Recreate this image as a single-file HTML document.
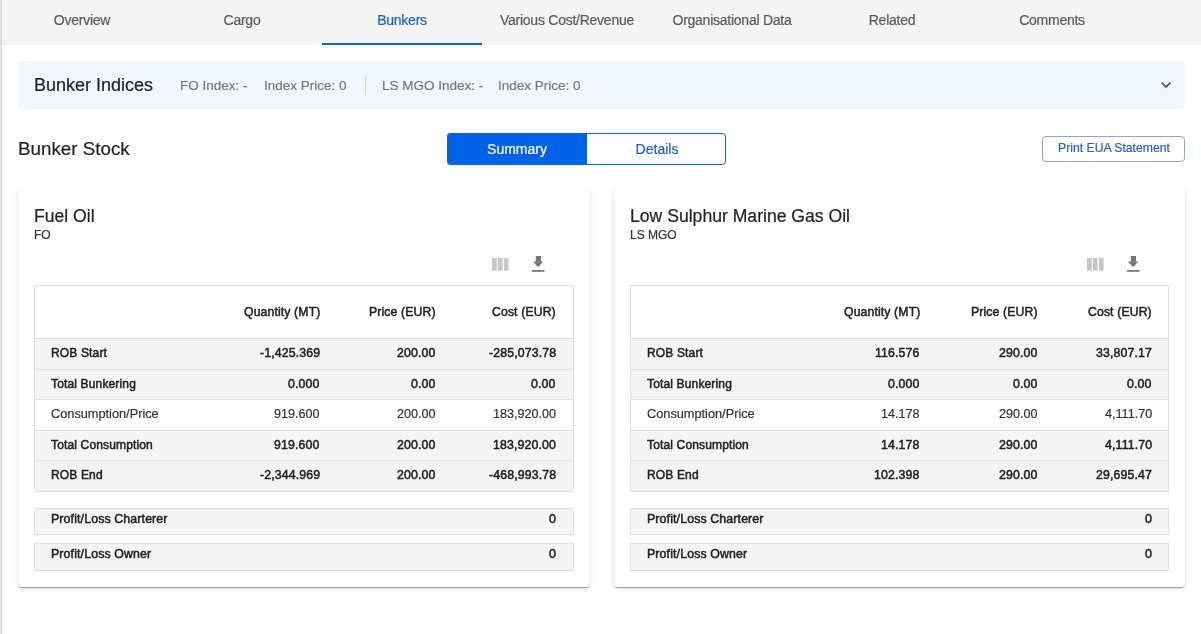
<!DOCTYPE html>
<html><head><meta charset="utf-8"><style>
html,body{margin:0;padding:0;width:1201px;height:634px;overflow:hidden;background:#fff;font-family:"Liberation Sans", sans-serif;position:relative}
</style></head><body>
<div style="position:absolute;left:0px;top:0px;width:1px;height:634px;background:#e4e4e4"></div>
<div style="position:absolute;left:1px;top:0px;width:1px;height:634px;background:#d8d8d8"></div>
<div style="position:absolute;left:2px;top:0px;width:1199px;height:45px;background:#f4f4f4"></div>
<div style="position:absolute;left:-218px;width:600px;text-align:center;top:12.21px;font-size:14px;line-height:16.086px;height:16.086px;color:#5a5a5a;font-weight:normal;white-space:nowrap;will-change:transform;letter-spacing:-0.25px;-webkit-text-stroke:0.2px #5a5a5a;">Overview</div>
<div style="position:absolute;left:-58px;width:600px;text-align:center;top:12.21px;font-size:14px;line-height:16.086px;height:16.086px;color:#5a5a5a;font-weight:normal;white-space:nowrap;will-change:transform;letter-spacing:-0.25px;-webkit-text-stroke:0.2px #5a5a5a;">Cargo</div>
<div style="position:absolute;left:102px;width:600px;text-align:center;top:12.21px;font-size:14px;line-height:16.086px;height:16.086px;color:#1f5fbf;font-weight:normal;white-space:nowrap;will-change:transform;letter-spacing:-0.25px;-webkit-text-stroke:0.2px #1f5fbf;">Bunkers</div>
<div style="position:absolute;left:267px;width:600px;text-align:center;top:12.21px;font-size:14px;line-height:16.086px;height:16.086px;color:#5a5a5a;font-weight:normal;white-space:nowrap;will-change:transform;letter-spacing:-0.25px;-webkit-text-stroke:0.2px #5a5a5a;">Various Cost/Revenue</div>
<div style="position:absolute;left:432px;width:600px;text-align:center;top:12.21px;font-size:14px;line-height:16.086px;height:16.086px;color:#5a5a5a;font-weight:normal;white-space:nowrap;will-change:transform;letter-spacing:-0.25px;-webkit-text-stroke:0.2px #5a5a5a;">Organisational Data</div>
<div style="position:absolute;left:592px;width:600px;text-align:center;top:12.21px;font-size:14px;line-height:16.086px;height:16.086px;color:#5a5a5a;font-weight:normal;white-space:nowrap;will-change:transform;letter-spacing:-0.25px;-webkit-text-stroke:0.2px #5a5a5a;">Related</div>
<div style="position:absolute;left:752px;width:600px;text-align:center;top:12.21px;font-size:14px;line-height:16.086px;height:16.086px;color:#5a5a5a;font-weight:normal;white-space:nowrap;will-change:transform;letter-spacing:-0.25px;-webkit-text-stroke:0.2px #5a5a5a;">Comments</div>
<div style="position:absolute;left:322px;top:43px;width:160px;height:2px;background:#1d5cb9"></div>
<div style="position:absolute;left:18px;top:61px;width:1167px;height:48px;background:#f2f6fd;border-radius:5px"></div>
<div style="position:absolute;left:33.8px;top:74.72px;font-size:18px;line-height:20.682px;height:20.682px;color:#222;font-weight:normal;white-space:nowrap;will-change:transform;-webkit-text-stroke:0.2px #222;">Bunker Indices</div>
<div style="position:absolute;left:180px;top:78.07px;font-size:13.5px;line-height:15.511px;height:15.511px;color:#777;font-weight:normal;white-space:nowrap;will-change:transform;-webkit-text-stroke:0.2px #777;">FO Index: -</div>
<div style="position:absolute;left:263.7px;top:78.07px;font-size:13.5px;line-height:15.511px;height:15.511px;color:#777;font-weight:normal;white-space:nowrap;will-change:transform;-webkit-text-stroke:0.2px #777;">Index Price: 0</div>
<div style="position:absolute;left:365px;top:75px;width:1px;height:20px;background:#d8d8d8"></div>
<div style="position:absolute;left:382px;top:78.07px;font-size:13.5px;line-height:15.511px;height:15.511px;color:#777;font-weight:normal;white-space:nowrap;will-change:transform;-webkit-text-stroke:0.2px #777;">LS MGO Index: -</div>
<div style="position:absolute;left:498px;top:78.07px;font-size:13.5px;line-height:15.511px;height:15.511px;color:#777;font-weight:normal;white-space:nowrap;will-change:transform;-webkit-text-stroke:0.2px #777;">Index Price: 0</div>
<svg style="position:absolute;left:1158px;top:78px" width="16" height="14" viewBox="0 0 16 14"><path d="M3.6 4.6 L8 9 L12.4 4.6" fill="none" stroke="#5a5a5a" stroke-width="1.8" stroke-linecap="butt"/></svg>
<div style="position:absolute;left:18.2px;top:137.89px;font-size:18.8px;line-height:21.601px;height:21.601px;color:#222;font-weight:normal;white-space:nowrap;will-change:transform;-webkit-text-stroke:0.2px #222;">Bunker Stock</div>
<div style="position:absolute;left:447px;top:133px;width:279px;height:32px;box-sizing:border-box;border:1px solid #1f5fbf;border-radius:4px;background:#fff"></div>
<div style="position:absolute;left:447px;top:133px;width:140px;height:32px;background:#0062e6;border-radius:4px 0 0 4px"></div>
<div style="position:absolute;left:217px;width:600px;text-align:center;top:141.31px;font-size:14px;line-height:16.086px;height:16.086px;color:#fff;font-weight:normal;white-space:nowrap;will-change:transform;-webkit-text-stroke:0.2px #fff;">Summary</div>
<div style="position:absolute;left:356.5px;width:600px;text-align:center;top:141.31px;font-size:14px;line-height:16.086px;height:16.086px;color:#1f5fbf;font-weight:normal;white-space:nowrap;will-change:transform;-webkit-text-stroke:0.2px #1f5fbf;">Details</div>
<div style="position:absolute;left:1042px;top:136px;width:143px;height:26px;box-sizing:border-box;border:1px solid #8aa7dc;border-radius:4px;background:#fff"></div>
<div style="position:absolute;left:813.5px;width:600px;text-align:center;top:141.26px;font-size:12.2px;line-height:14.018px;height:14.018px;color:#2a60c0;font-weight:normal;white-space:nowrap;will-change:transform;-webkit-text-stroke:0.2px #2a60c0;">Print EUA Statement</div>
<div style="position:absolute;left:18px;top:189px;width:572px;height:398px;background:#fff;border-radius:4px;box-shadow:0px 2px 1px -1px rgba(0,0,0,0.2),0px 1px 1px 0px rgba(0,0,0,0.14),0px 1px 3px 0px rgba(0,0,0,0.12),0px 2px 6px 0px rgba(0,0,0,0.05)"></div>
<div style="position:absolute;left:34px;top:206.29px;font-size:17.6px;line-height:20.222px;height:20.222px;color:#222;font-weight:normal;white-space:nowrap;will-change:transform;-webkit-text-stroke:0.2px #222;">Fuel Oil</div>
<div style="position:absolute;left:34px;top:229.05px;font-size:12px;line-height:13.788px;height:13.788px;color:#333;font-weight:normal;white-space:nowrap;will-change:transform;-webkit-text-stroke:0.2px #333;">FO</div>
<svg style="position:absolute;left:488px;top:252px" width="24" height="24" viewBox="488 252 24 24"><rect x="492" y="258" width="4.8" height="12.7" fill="#c6c6c6"/><rect x="497.9" y="258" width="4.7" height="12.7" fill="#c6c6c6"/><rect x="504" y="258" width="4.6" height="12.7" fill="#c6c6c6"/></svg>
<svg style="position:absolute;left:526px;top:252px" width="24" height="24" viewBox="526 252 24 24"><rect x="535.8" y="256" width="5.2" height="5.8" fill="#777"/><path d="M533 261.4 L543.3 261.4 L538.15 267.3 Z" fill="#777"/><rect x="532" y="270" width="12.5" height="1.8" fill="#777"/></svg>
<div style="position:absolute;left:34px;top:285px;width:540px;height:207px;box-sizing:border-box;border:1px solid #dedede;background:#fff"></div>
<div style="position:absolute;left:35px;top:338px;width:538px;height:31px;background:#f4f4f4;border-top:1px solid #dedede;box-sizing:border-box"></div>
<div style="position:absolute;left:35px;top:369px;width:538px;height:30px;background:#f4f4f4;border-top:1px solid #dedede;box-sizing:border-box"></div>
<div style="position:absolute;left:35px;top:399px;width:538px;height:31px;background:#fff;border-top:1px solid #dedede;box-sizing:border-box"></div>
<div style="position:absolute;left:35px;top:430px;width:538px;height:30px;background:#f4f4f4;border-top:1px solid #dedede;box-sizing:border-box"></div>
<div style="position:absolute;left:35px;top:460px;width:538px;height:31px;background:#f4f4f4;border-top:1px solid #dedede;box-sizing:border-box"></div>
<div style="position:absolute;right:881px;top:305.46px;font-size:12.2px;line-height:14.018px;height:14.018px;color:#222;font-weight:normal;white-space:nowrap;will-change:transform;-webkit-text-stroke:0.5px #222;letter-spacing:0.15px;">Quantity (MT)</div>
<div style="position:absolute;right:765px;top:305.46px;font-size:12.2px;line-height:14.018px;height:14.018px;color:#222;font-weight:normal;white-space:nowrap;will-change:transform;-webkit-text-stroke:0.5px #222;letter-spacing:0.15px;">Price (EUR)</div>
<div style="position:absolute;right:645px;top:305.46px;font-size:12.2px;line-height:14.018px;height:14.018px;color:#222;font-weight:normal;white-space:nowrap;will-change:transform;-webkit-text-stroke:0.5px #222;letter-spacing:0.15px;">Cost (EUR)</div>
<div style="position:absolute;left:51.3px;top:347.45px;font-size:12px;line-height:13.788px;height:13.788px;color:#222;font-weight:normal;white-space:nowrap;will-change:transform;-webkit-text-stroke:0.5px #222;letter-spacing:0.15px;">ROB Start</div>
<div style="position:absolute;right:881px;top:346.17px;font-size:12.3px;line-height:14.133px;height:14.133px;color:#222;font-weight:normal;white-space:nowrap;will-change:transform;-webkit-text-stroke:0.5px #222;letter-spacing:0.15px;">-1,425.369</div>
<div style="position:absolute;right:765px;top:346.17px;font-size:12.3px;line-height:14.133px;height:14.133px;color:#222;font-weight:normal;white-space:nowrap;will-change:transform;-webkit-text-stroke:0.5px #222;letter-spacing:0.15px;">200.00</div>
<div style="position:absolute;right:645px;top:346.17px;font-size:12.3px;line-height:14.133px;height:14.133px;color:#222;font-weight:normal;white-space:nowrap;will-change:transform;-webkit-text-stroke:0.5px #222;letter-spacing:0.15px;">-285,073.78</div>
<div style="position:absolute;left:51.3px;top:378.45px;font-size:12px;line-height:13.788px;height:13.788px;color:#222;font-weight:normal;white-space:nowrap;will-change:transform;-webkit-text-stroke:0.5px #222;letter-spacing:0.15px;">Total Bunkering</div>
<div style="position:absolute;right:881px;top:377.17px;font-size:12.3px;line-height:14.133px;height:14.133px;color:#222;font-weight:normal;white-space:nowrap;will-change:transform;-webkit-text-stroke:0.5px #222;letter-spacing:0.15px;">0.000</div>
<div style="position:absolute;right:765px;top:377.17px;font-size:12.3px;line-height:14.133px;height:14.133px;color:#222;font-weight:normal;white-space:nowrap;will-change:transform;-webkit-text-stroke:0.5px #222;letter-spacing:0.15px;">0.00</div>
<div style="position:absolute;right:645px;top:377.17px;font-size:12.3px;line-height:14.133px;height:14.133px;color:#222;font-weight:normal;white-space:nowrap;will-change:transform;-webkit-text-stroke:0.5px #222;letter-spacing:0.15px;">0.00</div>
<div style="position:absolute;left:51.3px;top:406.76px;font-size:12.75px;line-height:14.650px;height:14.650px;color:#333;font-weight:normal;white-space:nowrap;will-change:transform;-webkit-text-stroke:0.2px #333;">Consumption/Price</div>
<div style="position:absolute;right:881px;top:406.90px;font-size:12.6px;line-height:14.477px;height:14.477px;color:#333;font-weight:normal;white-space:nowrap;will-change:transform;-webkit-text-stroke:0.2px #333;">919.600</div>
<div style="position:absolute;right:765px;top:406.90px;font-size:12.6px;line-height:14.477px;height:14.477px;color:#333;font-weight:normal;white-space:nowrap;will-change:transform;-webkit-text-stroke:0.2px #333;">200.00</div>
<div style="position:absolute;right:645px;top:406.90px;font-size:12.6px;line-height:14.477px;height:14.477px;color:#333;font-weight:normal;white-space:nowrap;will-change:transform;-webkit-text-stroke:0.2px #333;">183,920.00</div>
<div style="position:absolute;left:51.3px;top:439.45px;font-size:12px;line-height:13.788px;height:13.788px;color:#222;font-weight:normal;white-space:nowrap;will-change:transform;-webkit-text-stroke:0.5px #222;letter-spacing:0.15px;">Total Consumption</div>
<div style="position:absolute;right:881px;top:438.17px;font-size:12.3px;line-height:14.133px;height:14.133px;color:#222;font-weight:normal;white-space:nowrap;will-change:transform;-webkit-text-stroke:0.5px #222;letter-spacing:0.15px;">919.600</div>
<div style="position:absolute;right:765px;top:438.17px;font-size:12.3px;line-height:14.133px;height:14.133px;color:#222;font-weight:normal;white-space:nowrap;will-change:transform;-webkit-text-stroke:0.5px #222;letter-spacing:0.15px;">200.00</div>
<div style="position:absolute;right:645px;top:438.17px;font-size:12.3px;line-height:14.133px;height:14.133px;color:#222;font-weight:normal;white-space:nowrap;will-change:transform;-webkit-text-stroke:0.5px #222;letter-spacing:0.15px;">183,920.00</div>
<div style="position:absolute;left:51.3px;top:469.45px;font-size:12px;line-height:13.788px;height:13.788px;color:#222;font-weight:normal;white-space:nowrap;will-change:transform;-webkit-text-stroke:0.5px #222;letter-spacing:0.15px;">ROB End</div>
<div style="position:absolute;right:881px;top:468.17px;font-size:12.3px;line-height:14.133px;height:14.133px;color:#222;font-weight:normal;white-space:nowrap;will-change:transform;-webkit-text-stroke:0.5px #222;letter-spacing:0.15px;">-2,344.969</div>
<div style="position:absolute;right:765px;top:468.17px;font-size:12.3px;line-height:14.133px;height:14.133px;color:#222;font-weight:normal;white-space:nowrap;will-change:transform;-webkit-text-stroke:0.5px #222;letter-spacing:0.15px;">200.00</div>
<div style="position:absolute;right:645px;top:468.17px;font-size:12.3px;line-height:14.133px;height:14.133px;color:#222;font-weight:normal;white-space:nowrap;will-change:transform;-webkit-text-stroke:0.5px #222;letter-spacing:0.15px;">-468,993.78</div>
<div style="position:absolute;left:34px;top:508px;width:540px;height:27px;box-sizing:border-box;border:1px solid #dedede;background:#f4f4f4"></div>
<div style="position:absolute;left:51.3px;top:512.47px;font-size:12.3px;line-height:14.133px;height:14.133px;color:#222;font-weight:normal;white-space:nowrap;will-change:transform;-webkit-text-stroke:0.5px #222;letter-spacing:0.15px;">Profit/Loss Charterer</div>
<div style="position:absolute;right:645px;top:512.29px;font-size:12.5px;line-height:14.363px;height:14.363px;color:#222;font-weight:normal;white-space:nowrap;will-change:transform;-webkit-text-stroke:0.5px #222;letter-spacing:0.15px;">0</div>
<div style="position:absolute;left:34px;top:543px;width:540px;height:28px;box-sizing:border-box;border:1px solid #dedede;background:#f4f4f4"></div>
<div style="position:absolute;left:51.3px;top:547.17px;font-size:12.3px;line-height:14.133px;height:14.133px;color:#222;font-weight:normal;white-space:nowrap;will-change:transform;-webkit-text-stroke:0.5px #222;letter-spacing:0.15px;">Profit/Loss Owner</div>
<div style="position:absolute;right:645px;top:546.99px;font-size:12.5px;line-height:14.363px;height:14.363px;color:#222;font-weight:normal;white-space:nowrap;will-change:transform;-webkit-text-stroke:0.5px #222;letter-spacing:0.15px;">0</div>
<div style="position:absolute;left:614px;top:189px;width:571px;height:398px;background:#fff;border-radius:4px;box-shadow:0px 2px 1px -1px rgba(0,0,0,0.2),0px 1px 1px 0px rgba(0,0,0,0.14),0px 1px 3px 0px rgba(0,0,0,0.12),0px 2px 6px 0px rgba(0,0,0,0.05)"></div>
<div style="position:absolute;left:630px;top:206.29px;font-size:17.6px;line-height:20.222px;height:20.222px;color:#222;font-weight:normal;white-space:nowrap;will-change:transform;-webkit-text-stroke:0.2px #222;">Low Sulphur Marine Gas Oil</div>
<div style="position:absolute;left:630px;top:229.05px;font-size:12px;line-height:13.788px;height:13.788px;color:#333;font-weight:normal;white-space:nowrap;will-change:transform;-webkit-text-stroke:0.2px #333;">LS MGO</div>
<svg style="position:absolute;left:1083px;top:252px" width="24" height="24" viewBox="488 252 24 24"><rect x="492" y="258" width="4.8" height="12.7" fill="#c6c6c6"/><rect x="497.9" y="258" width="4.7" height="12.7" fill="#c6c6c6"/><rect x="504" y="258" width="4.6" height="12.7" fill="#c6c6c6"/></svg>
<svg style="position:absolute;left:1121px;top:252px" width="24" height="24" viewBox="526 252 24 24"><rect x="535.8" y="256" width="5.2" height="5.8" fill="#777"/><path d="M533 261.4 L543.3 261.4 L538.15 267.3 Z" fill="#777"/><rect x="532" y="270" width="12.5" height="1.8" fill="#777"/></svg>
<div style="position:absolute;left:630px;top:285px;width:539px;height:207px;box-sizing:border-box;border:1px solid #dedede;background:#fff"></div>
<div style="position:absolute;left:631px;top:338px;width:537px;height:31px;background:#f4f4f4;border-top:1px solid #dedede;box-sizing:border-box"></div>
<div style="position:absolute;left:631px;top:369px;width:537px;height:30px;background:#f4f4f4;border-top:1px solid #dedede;box-sizing:border-box"></div>
<div style="position:absolute;left:631px;top:399px;width:537px;height:31px;background:#fff;border-top:1px solid #dedede;box-sizing:border-box"></div>
<div style="position:absolute;left:631px;top:430px;width:537px;height:30px;background:#f4f4f4;border-top:1px solid #dedede;box-sizing:border-box"></div>
<div style="position:absolute;left:631px;top:460px;width:537px;height:31px;background:#f4f4f4;border-top:1px solid #dedede;box-sizing:border-box"></div>
<div style="position:absolute;right:281px;top:305.46px;font-size:12.2px;line-height:14.018px;height:14.018px;color:#222;font-weight:normal;white-space:nowrap;will-change:transform;-webkit-text-stroke:0.5px #222;letter-spacing:0.15px;">Quantity (MT)</div>
<div style="position:absolute;right:163px;top:305.46px;font-size:12.2px;line-height:14.018px;height:14.018px;color:#222;font-weight:normal;white-space:nowrap;will-change:transform;-webkit-text-stroke:0.5px #222;letter-spacing:0.15px;">Price (EUR)</div>
<div style="position:absolute;right:49px;top:305.46px;font-size:12.2px;line-height:14.018px;height:14.018px;color:#222;font-weight:normal;white-space:nowrap;will-change:transform;-webkit-text-stroke:0.5px #222;letter-spacing:0.15px;">Cost (EUR)</div>
<div style="position:absolute;left:647.3px;top:347.45px;font-size:12px;line-height:13.788px;height:13.788px;color:#222;font-weight:normal;white-space:nowrap;will-change:transform;-webkit-text-stroke:0.5px #222;letter-spacing:0.15px;">ROB Start</div>
<div style="position:absolute;right:281px;top:346.17px;font-size:12.3px;line-height:14.133px;height:14.133px;color:#222;font-weight:normal;white-space:nowrap;will-change:transform;-webkit-text-stroke:0.5px #222;letter-spacing:0.15px;">116.576</div>
<div style="position:absolute;right:163px;top:346.17px;font-size:12.3px;line-height:14.133px;height:14.133px;color:#222;font-weight:normal;white-space:nowrap;will-change:transform;-webkit-text-stroke:0.5px #222;letter-spacing:0.15px;">290.00</div>
<div style="position:absolute;right:49px;top:346.17px;font-size:12.3px;line-height:14.133px;height:14.133px;color:#222;font-weight:normal;white-space:nowrap;will-change:transform;-webkit-text-stroke:0.5px #222;letter-spacing:0.15px;">33,807.17</div>
<div style="position:absolute;left:647.3px;top:378.45px;font-size:12px;line-height:13.788px;height:13.788px;color:#222;font-weight:normal;white-space:nowrap;will-change:transform;-webkit-text-stroke:0.5px #222;letter-spacing:0.15px;">Total Bunkering</div>
<div style="position:absolute;right:281px;top:377.17px;font-size:12.3px;line-height:14.133px;height:14.133px;color:#222;font-weight:normal;white-space:nowrap;will-change:transform;-webkit-text-stroke:0.5px #222;letter-spacing:0.15px;">0.000</div>
<div style="position:absolute;right:163px;top:377.17px;font-size:12.3px;line-height:14.133px;height:14.133px;color:#222;font-weight:normal;white-space:nowrap;will-change:transform;-webkit-text-stroke:0.5px #222;letter-spacing:0.15px;">0.00</div>
<div style="position:absolute;right:49px;top:377.17px;font-size:12.3px;line-height:14.133px;height:14.133px;color:#222;font-weight:normal;white-space:nowrap;will-change:transform;-webkit-text-stroke:0.5px #222;letter-spacing:0.15px;">0.00</div>
<div style="position:absolute;left:647.3px;top:406.76px;font-size:12.75px;line-height:14.650px;height:14.650px;color:#333;font-weight:normal;white-space:nowrap;will-change:transform;-webkit-text-stroke:0.2px #333;">Consumption/Price</div>
<div style="position:absolute;right:281px;top:406.90px;font-size:12.6px;line-height:14.477px;height:14.477px;color:#333;font-weight:normal;white-space:nowrap;will-change:transform;-webkit-text-stroke:0.2px #333;">14.178</div>
<div style="position:absolute;right:163px;top:406.90px;font-size:12.6px;line-height:14.477px;height:14.477px;color:#333;font-weight:normal;white-space:nowrap;will-change:transform;-webkit-text-stroke:0.2px #333;">290.00</div>
<div style="position:absolute;right:49px;top:406.90px;font-size:12.6px;line-height:14.477px;height:14.477px;color:#333;font-weight:normal;white-space:nowrap;will-change:transform;-webkit-text-stroke:0.2px #333;">4,111.70</div>
<div style="position:absolute;left:647.3px;top:439.45px;font-size:12px;line-height:13.788px;height:13.788px;color:#222;font-weight:normal;white-space:nowrap;will-change:transform;-webkit-text-stroke:0.5px #222;letter-spacing:0.15px;">Total Consumption</div>
<div style="position:absolute;right:281px;top:438.17px;font-size:12.3px;line-height:14.133px;height:14.133px;color:#222;font-weight:normal;white-space:nowrap;will-change:transform;-webkit-text-stroke:0.5px #222;letter-spacing:0.15px;">14.178</div>
<div style="position:absolute;right:163px;top:438.17px;font-size:12.3px;line-height:14.133px;height:14.133px;color:#222;font-weight:normal;white-space:nowrap;will-change:transform;-webkit-text-stroke:0.5px #222;letter-spacing:0.15px;">290.00</div>
<div style="position:absolute;right:49px;top:438.17px;font-size:12.3px;line-height:14.133px;height:14.133px;color:#222;font-weight:normal;white-space:nowrap;will-change:transform;-webkit-text-stroke:0.5px #222;letter-spacing:0.15px;">4,111.70</div>
<div style="position:absolute;left:647.3px;top:469.45px;font-size:12px;line-height:13.788px;height:13.788px;color:#222;font-weight:normal;white-space:nowrap;will-change:transform;-webkit-text-stroke:0.5px #222;letter-spacing:0.15px;">ROB End</div>
<div style="position:absolute;right:281px;top:468.17px;font-size:12.3px;line-height:14.133px;height:14.133px;color:#222;font-weight:normal;white-space:nowrap;will-change:transform;-webkit-text-stroke:0.5px #222;letter-spacing:0.15px;">102.398</div>
<div style="position:absolute;right:163px;top:468.17px;font-size:12.3px;line-height:14.133px;height:14.133px;color:#222;font-weight:normal;white-space:nowrap;will-change:transform;-webkit-text-stroke:0.5px #222;letter-spacing:0.15px;">290.00</div>
<div style="position:absolute;right:49px;top:468.17px;font-size:12.3px;line-height:14.133px;height:14.133px;color:#222;font-weight:normal;white-space:nowrap;will-change:transform;-webkit-text-stroke:0.5px #222;letter-spacing:0.15px;">29,695.47</div>
<div style="position:absolute;left:630px;top:508px;width:539px;height:27px;box-sizing:border-box;border:1px solid #dedede;background:#f4f4f4"></div>
<div style="position:absolute;left:647.3px;top:512.47px;font-size:12.3px;line-height:14.133px;height:14.133px;color:#222;font-weight:normal;white-space:nowrap;will-change:transform;-webkit-text-stroke:0.5px #222;letter-spacing:0.15px;">Profit/Loss Charterer</div>
<div style="position:absolute;right:49px;top:512.29px;font-size:12.5px;line-height:14.363px;height:14.363px;color:#222;font-weight:normal;white-space:nowrap;will-change:transform;-webkit-text-stroke:0.5px #222;letter-spacing:0.15px;">0</div>
<div style="position:absolute;left:630px;top:543px;width:539px;height:28px;box-sizing:border-box;border:1px solid #dedede;background:#f4f4f4"></div>
<div style="position:absolute;left:647.3px;top:547.17px;font-size:12.3px;line-height:14.133px;height:14.133px;color:#222;font-weight:normal;white-space:nowrap;will-change:transform;-webkit-text-stroke:0.5px #222;letter-spacing:0.15px;">Profit/Loss Owner</div>
<div style="position:absolute;right:49px;top:546.99px;font-size:12.5px;line-height:14.363px;height:14.363px;color:#222;font-weight:normal;white-space:nowrap;will-change:transform;-webkit-text-stroke:0.5px #222;letter-spacing:0.15px;">0</div>
</body></html>
